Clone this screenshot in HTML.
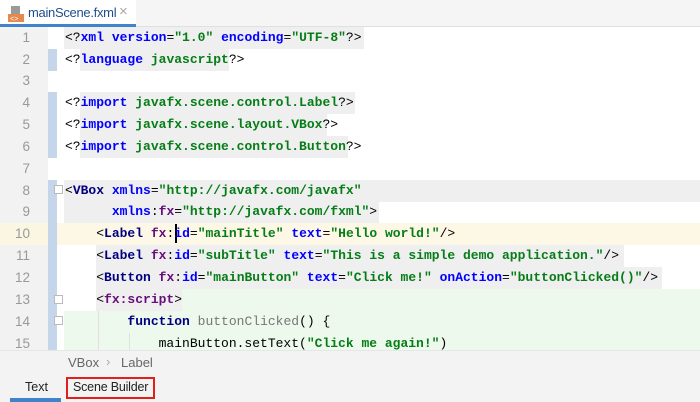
<!DOCTYPE html>
<html><head><meta charset="utf-8"><style>
*{margin:0;padding:0;box-sizing:border-box}
body{width:700px;height:402px;overflow:hidden;background:#fff;font-family:"Liberation Sans",sans-serif;position:relative}
.top{position:absolute;left:0;top:0;width:700px;height:27px;background:#f5f5f5;border-bottom:1px solid #e0e0e0}
.tab{position:absolute;left:0;top:0;width:136px;height:27px;background:#fff;border-bottom:3px solid #4083c9}
.tab .t{position:absolute;left:28px;top:5px;font-size:13px;color:#1f4e8c;letter-spacing:-0.3px}
.tab .x{position:absolute;left:119px;top:3px;font-size:15px;color:#aaa}
.ic{position:absolute;left:8px;top:6px;width:16px;height:16px}
.gut{position:absolute;left:0;top:27px;width:48px;height:323px;background:#f2f2f2}
.mark{position:absolute;left:48px;width:9px;background:#c6d6ea}
.row{position:absolute;left:0;width:700px;height:21.8px}
.num{position:absolute;left:0;width:30px;text-align:right;font-family:"Liberation Sans",sans-serif;font-size:13.5px;color:#999;line-height:21.8px}
.code{position:absolute;left:65px;font-family:"Liberation Mono",monospace;font-size:13px;line-height:21.8px;white-space:pre;color:#000}
.bg{position:absolute;height:21.8px}
.g{background:#efefef}.gr{background:#edf9ec}.y{background:#fdf8e6}
.tg,.at,.ns,.s{font-weight:bold}
.tg{color:#000080}.at{color:#0000ff}.ns{color:#660e7a}.s{color:#067d17}.p{color:#000}.fn{color:#777}
.crumb{position:absolute;left:0;top:350px;width:700px;height:24px;background:#f3f3f3;border-top:1px solid #e6e6e6;font-size:13px;color:#666}
.bot{position:absolute;left:0;top:374px;width:700px;height:28px;background:#f3f3f3;font-size:12.5px;color:#222}
.fold{position:absolute;left:54px;width:9px;height:9px;border:1px solid #bbb;background:#fff}
</style></head><body>
<div class="top"><div class="tab">
<svg class="ic" viewBox="0 0 16 16"><rect x="3" y="0" width="9" height="8" fill="#9a9a9a"/><rect x="0" y="8" width="16" height="8" fill="#e6894a"/><text x="2" y="15" font-size="7" fill="#fff" font-family="Liberation Mono">&lt;&gt;</text></svg>
<span class="t">mainScene.fxml</span><span class="x">×</span></div></div>
<div class="gut"></div>
<div class="mark" style="top:49px;height:22px"></div>
<div class="mark" style="top:92px;height:66px"></div>
<div class="mark" style="top:180px;height:170px"></div>

<div class="bg g" style="left:64px;top:27px;width:300px"></div>
<div class="bg g" style="left:80px;top:49px;width:149px"></div>
<div class="bg g" style="left:80px;top:92px;width:275px"></div>
<div class="bg g" style="left:80px;top:114px;width:247px"></div>
<div class="bg g" style="left:80px;top:136px;width:268px"></div>
<div class="bg g" style="left:64px;top:180px;width:636px"></div>
<div class="bg g" style="left:64px;top:201px;width:315px"></div>
<div class="bg y" style="left:0;top:223px;width:700px"></div>
<div class="bg g" style="left:96px;top:245px;width:528px"></div>
<div class="bg g" style="left:96px;top:267px;width:566px"></div>
<div class="bg g" style="left:96px;top:289px;width:86px"></div>
<div class="bg gr" style="left:182px;top:289px;width:518px"></div>
<div class="bg gr" style="left:64px;top:311px;width:636px;height:39px"></div>
<div style="position:absolute;left:48px;top:223px;width:9px;height:22px;background:#c6d6ea"></div>
<div style="position:absolute;left:0;top:223px;width:48px;height:22px;background:#fbf6e1"></div>
<div style="position:absolute;left:98px;top:311px;width:1px;height:39px;background:#e0e0e0"></div>
<div style="position:absolute;left:129px;top:333px;width:1px;height:17px;background:#e0e0e0"></div>
<div style="position:absolute;left:175px;top:224px;width:2px;height:19px;background:#000"></div>

<div class="fold" style="top:185px"></div>
<div class="fold" style="top:295px"></div>
<div class="fold" style="top:316px"></div>

<div class="row" style="top:27px"><span class="num">1</span><span class="code">&lt;?<span class="at">xml version</span>=<span class="s">"1.0"</span> <span class="at">encoding</span>=<span class="s">"UTF-8"</span>?&gt;</span></div>
<div class="row" style="top:49px"><span class="num">2</span><span class="code">&lt;?<span class="at">language</span> <span class="s">javascript</span>?&gt;</span></div>
<div class="row" style="top:70px"><span class="num">3</span></div>
<div class="row" style="top:92px"><span class="num">4</span><span class="code">&lt;?<span class="at">import</span> <span class="s">javafx.scene.control.Label</span>?&gt;</span></div>
<div class="row" style="top:114px"><span class="num">5</span><span class="code">&lt;?<span class="at">import</span> <span class="s">javafx.scene.layout.VBox</span>?&gt;</span></div>
<div class="row" style="top:136px"><span class="num">6</span><span class="code">&lt;?<span class="at">import</span> <span class="s">javafx.scene.control.Button</span>?&gt;</span></div>
<div class="row" style="top:158px"><span class="num">7</span></div>
<div class="row" style="top:180px"><span class="num">8</span><span class="code">&lt;<span class="tg">VBox</span> <span class="at">xmlns</span>=<span class="s">"http://javafx.com/javafx"</span></span></div>
<div class="row" style="top:201px"><span class="num">9</span><span class="code">      <span class="at">xmlns</span>:<span class="ns">fx</span>=<span class="s">"http://javafx.com/fxml"</span>&gt;</span></div>
<div class="row" style="top:223px"><span class="num">10</span><span class="code">    &lt;<span class="tg">Label</span> <span class="ns">fx</span>:<span class="at">id</span>=<span class="s">"mainTitle"</span> <span class="at">text</span>=<span class="s">"Hello world!"</span>/&gt;</span></div>
<div class="row" style="top:245px"><span class="num">11</span><span class="code">    &lt;<span class="tg">Label</span> <span class="ns">fx</span>:<span class="at">id</span>=<span class="s">"subTitle"</span> <span class="at">text</span>=<span class="s">"This is a simple demo application."</span>/&gt;</span></div>
<div class="row" style="top:267px"><span class="num">12</span><span class="code">    &lt;<span class="tg">Button</span> <span class="ns">fx</span>:<span class="at">id</span>=<span class="s">"mainButton"</span> <span class="at">text</span>=<span class="s">"Click me!"</span> <span class="at">onAction</span>=<span class="s">"buttonClicked()"</span>/&gt;</span></div>
<div class="row" style="top:289px"><span class="num">13</span><span class="code">    &lt;<span class="ns">fx:script</span>&gt;</span></div>
<div class="row" style="top:311px"><span class="num">14</span><span class="code">        <span class="tg">function</span> <span class="fn">buttonClicked</span>() {</span></div>
<div class="row" style="top:333px;height:17px;overflow:hidden"><span class="num">15</span><span class="code">            mainButton.setText(<span class="s">"Click me again!"</span>)</span></div>

<div class="crumb"><span style="position:absolute;left:68px;top:4px">VBox</span><span style="position:absolute;left:106px;top:3px;color:#aaa">›</span><span style="position:absolute;left:121px;top:4px">Label</span></div>
<div class="bot">
<span style="position:absolute;left:25px;top:6px">Text</span>
<div style="position:absolute;left:10px;top:24px;width:51px;height:4px;background:#4083c9"></div>
<div style="position:absolute;left:66px;top:3px;width:89px;height:22px;border:2px solid #e0201c"></div>
<span style="position:absolute;left:73px;top:6px;letter-spacing:-0.2px">Scene Builder</span>
</div>
</body></html>
